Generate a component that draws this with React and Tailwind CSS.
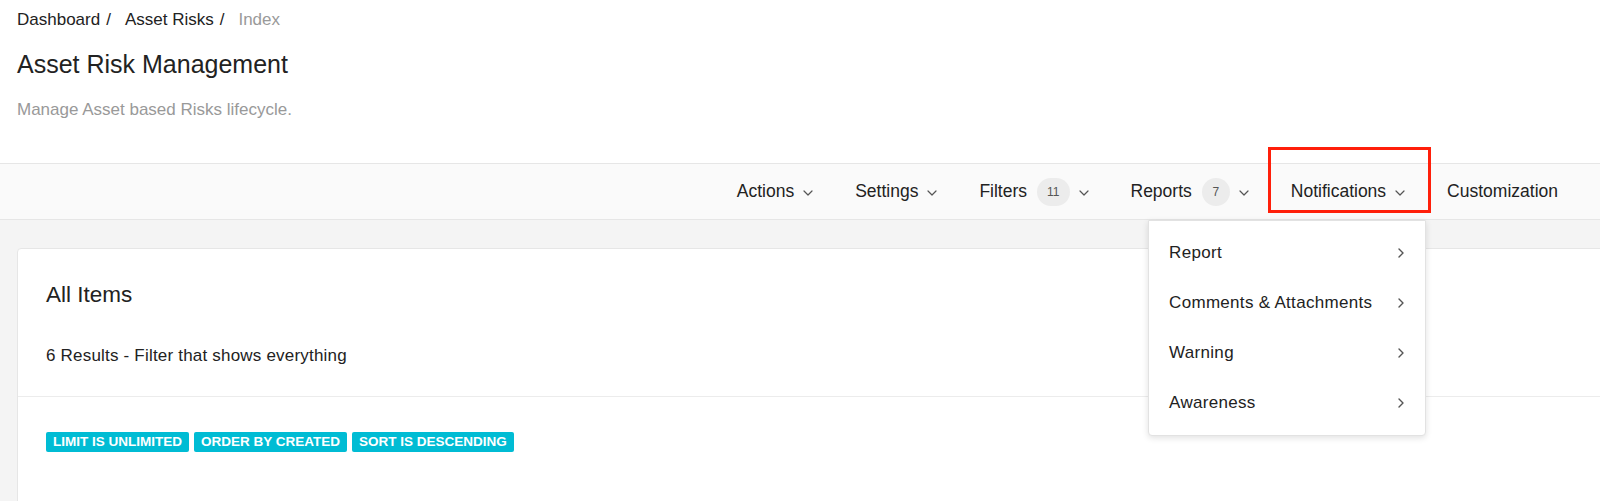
import React from 'react';

const ChevronDown = () => (
  <svg width="10" height="6" viewBox="0 0 10 6" fill="none" className="ml-[9px] mt-[2px]">
    <path d="M1 1l4 4 4-4" stroke="#555" strokeWidth="1.2" strokeLinecap="round" strokeLinejoin="round" />
  </svg>
);

const ChevronRight = () => (
  <svg width="6" height="10" viewBox="0 0 6 10" fill="none">
    <path d="M1 1l4 4-4 4" stroke="#555" strokeWidth="1.4" strokeLinecap="round" strokeLinejoin="round" />
  </svg>
);

const navItems = [
  { label: 'Actions' },
  { label: 'Settings' },
  { label: 'Filters', badge: '11' },
  { label: 'Reports', badge: '7' },
];

const menuItems = ['Report', 'Comments & Attachments', 'Warning', 'Awareness'];
const tags = ['LIMIT IS UNLIMITED', 'ORDER BY CREATED', 'SORT IS DESCENDING'];

export default function App() {
  return (
    <div className="h-[501px] w-full overflow-hidden bg-white text-[#222]" style={{ fontFamily: '"Liberation Sans", Arial, sans-serif' }}>
      {/* Page header */}
      <div className="px-[17px] pt-[8px]">
        <div className="flex items-center text-[17px] leading-[24px]">
          <span>Dashboard</span>
          <span className="ml-[6px] mr-[14px]">/</span>
          <span>Asset Risks</span>
          <span className="ml-[6px] mr-[14px]">/</span>
          <span className="text-[#9a9a9a]">Index</span>
        </div>
        <h1 className="mt-[16px] text-[25px] leading-[32px] font-normal">Asset Risk Management</h1>
        <p className="mt-[18px] text-[17px] leading-[24px] text-[#999]">Manage Asset based Risks lifecycle.</p>
      </div>

      {/* Toolbar */}
      <div className="mt-[41px] h-[57px] border-y border-[#e6e6e6] bg-[#fafafa] flex items-center justify-end pr-[21px] text-[17.5px]">
        {navItems.map((item) => (
          <div key={item.label} className="flex items-center px-[21px] h-full">
            <span>{item.label}</span>
            {item.badge && (
              <span className="ml-[10px] h-[28px] min-w-[28px] px-[10px] rounded-full bg-[#ececec] text-[12px] text-[#555] flex items-center justify-center">
                {item.badge}
              </span>
            )}
            <ChevronDown />
          </div>
        ))}
        <div className="relative flex items-center px-[21px] h-full">
          <span>Notifications</span>
          <ChevronDown />
          <div className="absolute left-[-2px] right-[-5px] top-[-17px] bottom-[6px] border-[3px] border-[#ff1f0a] pointer-events-none" />
          <div className="absolute right-0 top-[56px] w-[278px] z-10 bg-white border border-[#e2e2e2] rounded-b-[4px] shadow-[0_2px_6px_rgba(0,0,0,0.12)] py-[7px] text-[17px] tracking-[0.3px]">
            {menuItems.map((m) => (
              <div key={m} className="h-[50px] flex items-center justify-between pl-[20px] pr-[21px]">
                <span>{m}</span>
                <ChevronRight />
              </div>
            ))}
          </div>
        </div>
        <div className="flex items-center px-[21px] h-full">
          <span>Customization</span>
        </div>
      </div>

      {/* Content */}
      <div className="bg-[#f4f4f4] pl-[17px] pt-[28px] h-full">
        <div className="mr-[-20px] bg-white border border-[#e6e6e6] rounded-[4px]">
          <div className="px-[28px] pt-[32px] pb-[28px] border-b border-[#ececec]">
            <h2 className="text-[22.5px] leading-[28px] font-normal">All Items</h2>
            <p className="mt-[35px] text-[17px] leading-[24px] tracking-[0.2px]">6 Results - Filter that shows everything</p>
          </div>
          <div className="px-[28px] pt-[35px] pb-[60px] flex gap-[5px]">
            {tags.map((t) => (
              <span key={t} className="h-[20px] px-[7px] flex items-center rounded-[2px] bg-[#00bcd4] text-white text-[13.5px] font-bold">
                {t}
              </span>
            ))}
          </div>
        </div>
      </div>
    </div>
  );
}
